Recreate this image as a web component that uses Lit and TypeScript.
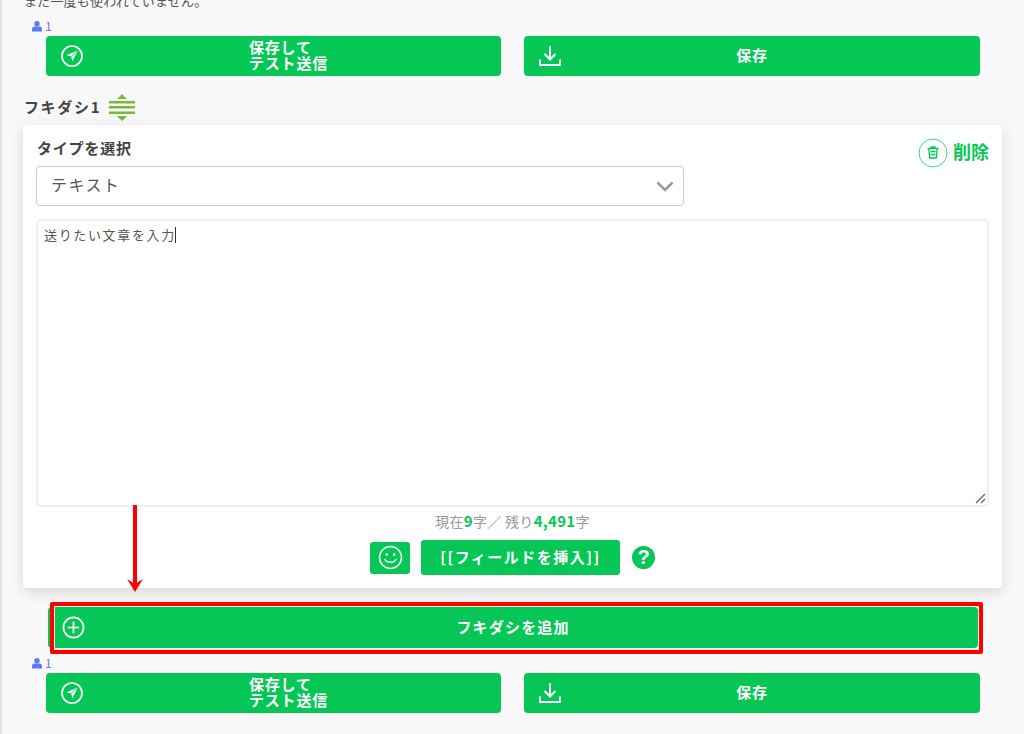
import { LitElement, html, css } from "lit";
import { customElement } from "lit/decorators.js";

const sendIcon = html`<svg class="ic" width="24" height="24" viewBox="0 0 24 24" fill="none"><circle cx="12" cy="12" r="10" stroke="#fff" stroke-width="1.700"/><path d="M17.800 6.500 6.500 11.300l4.700 1.200 1.200 4.800z" fill="#fff"/><path d="M17.800 6.500 11 12.700" stroke="#06c755" stroke-width=".8"/></svg>`;
const dlIcon = html`<svg class="ic" width="24" height="24" viewBox="0 0 24 24" fill="none" stroke="#fff" stroke-width="2"><path d="M12 2v13M6.500 10l5.500 5.500 5.500-5.500"/><path d="M2 15.500V21h20v-5.500"/></svg>`;
const userIcon = html`<svg width="10" height="11" viewBox="0 0 10 11" fill="#5f78f5"><circle cx="5" cy="2.800" r="2.700"/><path d="M0 10.500V8c0-1.700 1.500-2.500 2.500-2.500h5c1 0 2.500.8 2.500 2.500v2.500z"/></svg>`;
const saveRow = html`<div class="row">
  <button class="btn send">${sendIcon}<span>保存して<br />テスト送信</span></button>
  <button class="btn">${dlIcon}<span>保存</span></button>
</div>`;

@customElement("app-root")
export class AppRoot extends LitElement {
  static styles = css`
    :host { display: block; width: 1024px; height: 734px; overflow: hidden; position: relative; background: #f8f8f8; font-family: "Noto Sans CJK JP", "Noto Sans", sans-serif; color: #444; }
    .page { display: flow-root; border-left: 2px solid #e2e2e2; height: 734px; box-sizing: border-box; padding-left: 21px; }
    .note { margin: -8px 0 0 1px; font-size: 13px; line-height: 18px; letter-spacing: 0.2px; color: #555; }
    .user { display: flex; align-items: center; gap: 3px; height: 14px; margin: 9px 0 0 9px; color: #5f78f5; font-size: 12px; line-height: 14px; }
    .user.last { margin-top: 8px; }
    .row { display: grid; grid-template-columns: 455px 456px; gap: 23px; margin: 3px 0 0 23px; }
    .btn { position: relative; height: 40px; border: 0; border-radius: 4px; background: #06c755; color: #fff; font: 700 15px/16px "Noto Sans CJK JP", sans-serif; letter-spacing: 0.8px; display: flex; align-items: center; justify-content: center; padding: 0 0 2px; text-align: left; }
    .send { padding-left: 30px; }
    .ic { position: absolute; left: 14px; top: 8px; }
    .plus { left: 14px; top: 9px; }
    .head { display: flex; align-items: center; gap: 8px; height: 26px; margin: 18px 0 5px 1px; font-size: 15px; font-weight: 700; letter-spacing: 1.600px; color: #444; }
    .head span { margin-top: -2px; }
    .card { width: 979px; height: 463px; box-sizing: border-box; background: #fff; border-radius: 4px; box-shadow: 0 4px 14px rgba(0,0,0,.13); padding: 11px 13px 0; position: relative; display: flex; flex-direction: column; }
    .label { font-size: 15px; font-weight: 700; line-height: 24px; letter-spacing: 0.8px; margin: 0 0 6px 1px; color: #444; }
    .select { width: 648px; height: 40px; box-sizing: border-box; border: 1px solid #ccc; border-radius: 4px; display: flex; align-items: center; justify-content: space-between; padding: 0 9px 0 14px; font-size: 16px; line-height: 34px; letter-spacing: 1.500px; color: #555; }
    .select span { margin-top: -4px; }
    .del { position: absolute; top: 13px; right: 13px; display: flex; align-items: center; gap: 5px; color: #06c755; font-size: 18px; font-weight: 700; line-height: 29px; }
    .del span { margin-top: -3px; }
    .area { width: 953px; height: 288px; box-sizing: border-box; border: 2px solid #eee; border-radius: 5px; margin-top: 13px; padding: 3px 6px; font-size: 13px; line-height: 22px; letter-spacing: 1.650px; color: #555; position: relative; }
    .caret { display: inline-block; width: 1px; height: 16px; background: #333; vertical-align: -3px; margin-left: -1px; }
    .grip { position: absolute; right: 1px; bottom: 1px; }
    .count { width: 953px; text-align: center; font-size: 14px; line-height: 18px; margin-top: 5px; color: #999; letter-spacing: 0.3px; }
    .count b { color: #06c755; font-size: 15px; }
    .tools { display: flex; justify-content: center; align-items: center; width: 953px; margin-top: 10px; }
    .smile { width: 40px; height: 32px; border-radius: 3px; background: #06c755; display: flex; align-items: center; justify-content: center; }
    .field { width: 199px; height: 35px; box-sizing: border-box; padding-bottom: 3px; margin-left: 11px; border-radius: 3px; background: #06c755; color: #fff; font-size: 15px; font-weight: 700; letter-spacing: 1.500px; display: flex; align-items: center; justify-content: center; }
    .q { width: 23px; height: 23px; margin-left: 12px; border-radius: 50%; background: #06c755; color: #fff; font: 700 20px/23px "Liberation Sans", sans-serif; text-align: center; }
    .add { position: relative; width: 930px; height: 41px; box-sizing: border-box; padding-bottom: 2px; margin: 19px 0 0 25px; border-radius: 4px; background: #06c755; color: #fff; font-size: 15px; font-weight: 700; letter-spacing: 1.100px; display: flex; align-items: center; justify-content: center; }
    .frame { position: absolute; left: 50px; top: 602px; width: 933px; height: 52px; box-sizing: border-box; border: 4px solid #f00; border-radius: 2px; box-shadow: inset 0 0 0 1px #d8f0e0; }
    .arrow { position: absolute; left: 126px; top: 505px; }
  `;

  render() {
    return html`<div class="page">
        <div class="note">まだ一度も使われていません。</div>
        <div class="user">${userIcon}<span>1</span></div>
        ${saveRow}
        <div class="head">
          <span>フキダシ1</span>
          <svg width="26" height="27" viewBox="0 0 26 27" fill="#7cb83a">
            <path d="M13 0l5 5H8zM13 27l-5-5h10z"/>
            <rect y="7" width="26" height="2.500"/><rect y="12" width="26" height="2.500"/><rect y="17.500" width="26" height="2.500"/>
          </svg>
        </div>
        <div class="card">
          <div class="label">タイプを選択</div>
          <div class="select">
            <span>テキスト</span>
            <svg width="18" height="11" viewBox="0 0 18 11" fill="none" stroke="#999" stroke-width="2.500"><path d="M1.500 1.500 9 9l7.500-7.500"/></svg>
          </div>
          <div class="del">
            <svg width="30" height="30" viewBox="0 0 30 30" fill="none" stroke="#06c755">
              <circle cx="15" cy="15" r="14" stroke-opacity=".75"/>
              <path d="M9.500 10.500h11M13 10.500V9h4v1.500M10.800 10.500l.9 9.500h6.600l.9-9.500" stroke-width="1.300"/>
              <path d="M12.500 13.500h5M12.500 16.500h5" stroke-width="1.300"/>
            </svg>
            <span>削除</span>
          </div>
          <div class="area">送りたい文章を入力<span class="caret"></span>
            <svg class="grip" width="12" height="12" viewBox="0 0 12 12" stroke="#666" stroke-width="1.300"><path d="M2 11 11 2M7 11l4-4"/></svg>
          </div>
          <div class="count">現在<b>9</b>字／ 残り<b>4,491</b>字</div>
          <div class="tools">
            <div class="smile">
              <svg width="25" height="25" viewBox="0 0 25 25" fill="none" stroke="#fff" stroke-width="1.500">
                <circle cx="12.500" cy="12.500" r="11"/>
                <path d="M7 14.500c1.500 3.500 9.500 3.500 11 0" stroke-linecap="round"/>
                <circle cx="8.800" cy="9.500" r="1.300" fill="#fff" stroke="none"/><circle cx="16.200" cy="9.500" r="1.300" fill="#fff" stroke="none"/>
              </svg>
            </div>
            <div class="field">[[フィールドを挿入]]</div>
            <div class="q">?</div>
          </div>
        </div>
        <div class="add">
          <svg class="ic plus" width="23" height="23" viewBox="0 0 24 24" fill="none" stroke="#fff" stroke-width="1.800"><circle cx="12" cy="12" r="10.500"/><path d="M12 6v12M6 12h12"/></svg>
          <span>フキダシを追加</span>
        </div>
        <div class="user last">${userIcon}<span>1</span></div>
        ${saveRow}
      </div>
      <div class="frame"></div>
      <svg class="arrow" width="18" height="88" viewBox="0 0 18 88"><path d="M9 0v80" stroke="#f00" stroke-width="4"/><path d="M1 74 9 87l8-13-8 5z" fill="#f00"/></svg>`;
  }
}
